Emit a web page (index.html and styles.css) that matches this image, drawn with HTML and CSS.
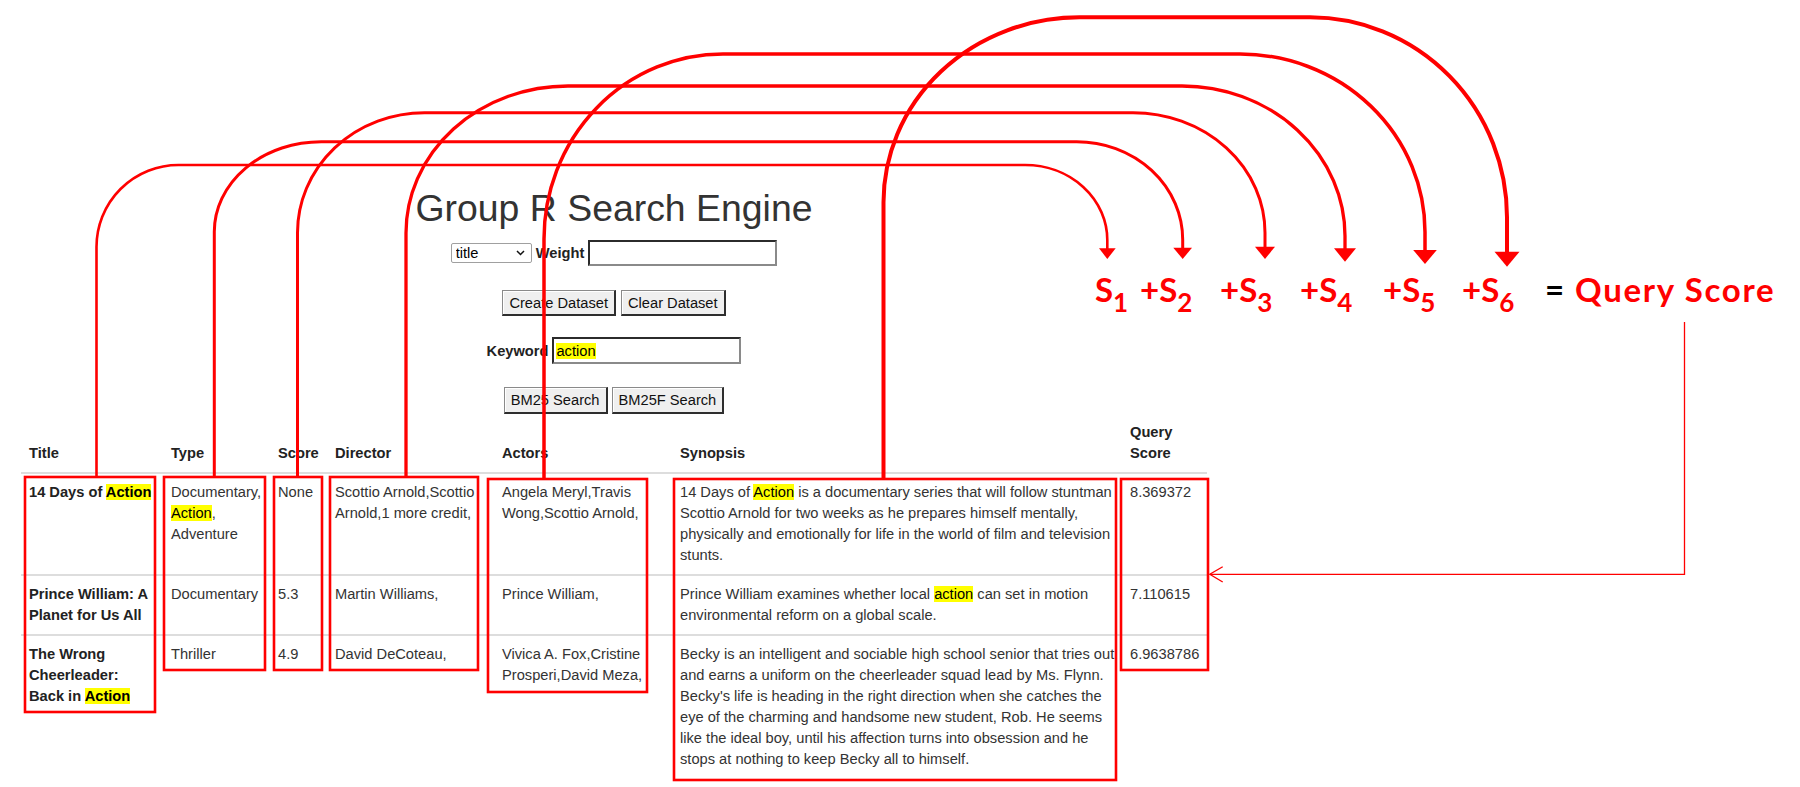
FILE: index.html
```html
<!DOCTYPE html>
<html lang="en">
<head>
<meta charset="utf-8">
<title>Group R Search Engine</title>
<link rel="stylesheet" href="styles.css">
</head>
<body>
<div class="page">
  <h1 class="title">Group R Search Engine</h1>

  <div class="form-row row-weight">
    <div class="select-wrap">
      <select class="field-select"><option>title</option></select>
      <svg class="chevron" width="9" height="6" viewBox="0 0 9 6"><path d="M1 1 L4.5 4.5 L8 1" fill="none" stroke="#111" stroke-width="1.5"/></svg>
    </div>
    <label class="label">Weight</label>
    <input class="text-input" type="text">
  </div>

  <div class="form-row row-dataset">
    <button class="btn">Create Dataset</button>
    <button class="btn">Clear Dataset</button>
  </div>

  <div class="form-row row-keyword">
    <label class="label">Keyword</label>
    <div class="text-input keyword-input"><mark>action</mark></div>
  </div>

  <div class="form-row row-search">
    <button class="btn">BM25 Search</button>
    <button class="btn">BM25F Search</button>
  </div>

  <table class="results">
    <colgroup>
      <col class="c-title"><col class="c-type"><col class="c-score"><col class="c-director"><col class="c-actors"><col class="c-synopsis"><col class="c-qs">
    </colgroup>
    <thead>
      <tr>
        <th>Title</th><th>Type</th><th>Score</th><th>Director</th><th>Actors</th><th>Synopsis</th><th>Query Score</th>
      </tr>
    </thead>
    <tbody>
      <tr>
        <td class="t-title">14 Days of <mark>Action</mark></td>
        <td>Documentary, <mark>Action</mark>, Adventure</td>
        <td>None</td>
        <td>Scottio Arnold,Scottio Arnold,1 more credit,</td>
        <td>Angela Meryl,Travis Wong,Scottio Arnold,</td>
        <td class="t-syn">14 Days of <mark>Action</mark> is a documentary series that will follow stuntman Scottio Arnold for two weeks as he prepares himself mentally, physically and emotionally for life in the world of film and television stunts.</td>
        <td>8.369372</td>
      </tr>
      <tr>
        <td class="t-title">Prince William: A Planet for Us All</td>
        <td>Documentary</td>
        <td>5.3</td>
        <td>Martin Williams,</td>
        <td>Prince William,</td>
        <td class="t-syn">Prince William examines whether local <mark>action</mark> can set in motion environmental reform on a global scale.</td>
        <td>7.110615</td>
      </tr>
      <tr class="last">
        <td class="t-title">The Wrong Cheerleader: Back in <mark>Action</mark></td>
        <td>Thriller</td>
        <td>4.9</td>
        <td>David DeCoteau,</td>
        <td>Vivica A. Fox,Cristine Prosperi,David Meza,</td>
        <td class="t-syn">Becky is an intelligent and sociable high school senior that tries out and earns a uniform on the cheerleader squad lead by Ms. Flynn. Becky's life is heading in the right direction when she catches the eye of the charming and handsome new student, Rob. He seems like the ideal boy, until his affection turns into obsession and he stops at nothing to keep Becky all to himself.</td>
        <td>6.9638786</td>
      </tr>
    </tbody>
  </table>
</div>

<svg class="annotations" width="1800" height="787" viewBox="0 0 1800 787">
  <g fill="none" stroke="#f00" stroke-width="2.6">
    <rect x="25" y="477" width="130" height="235"/>
    <rect x="164" y="477" width="101" height="193"/>
    <rect x="274" y="477" width="48" height="193"/>
    <rect x="330" y="477" width="148" height="193"/>
    <rect x="488" y="479" width="159" height="213"/>
    <rect x="674" y="479" width="442" height="301"/>
    <rect x="1121" y="479" width="87" height="191"/>
  </g>
  <g fill="none" stroke="#f00">
    <path stroke-width="2.6" d="M96.5 477 V247 A82 82 0 0 1 178.5 165 H1025 A82.3 75 0 0 1 1107.3 240 V250"/>
    <path stroke-width="3" d="M214.3 477 V231.7 A107 90 0 0 1 321.3 141.7 H1076.7 A106 98 0 0 1 1182.7 239.7 V249"/>
    <path stroke-width="3" d="M297.5 477 V232.7 A127 120 0 0 1 424.5 112.7 H1133 A132 120 0 0 1 1265 232.7 V248"/>
    <path stroke-width="3.3" d="M406 477 V233 A162 147 0 0 1 568 86 H1182 A163 150 0 0 1 1345 236 V250"/>
    <path stroke-width="3.5" d="M544 479 V239 A179 185 0 0 1 723 54 H1240 A185 178 0 0 1 1425 232 V251"/>
    <path stroke-width="4" d="M883.5 479 V202.3 A196 185 0 0 1 1079.5 17.3 H1310 A197 200 0 0 1 1507 217.3 V253"/>
    <path stroke-width="1.3" d="M1684.5 322 V574.3 H1210"/>
    <path stroke-width="1.3" d="M1222.7 566.7 L1209.8 574.3 L1222.7 582"/>
  </g>
  <g fill="#f00">
    <polygon points="1099,248.3 1115.7,248.3 1107.3,259"/>
    <polygon points="1173.3,247.7 1192,247.7 1182.7,259"/>
    <polygon points="1255,246.7 1275,246.7 1265,259"/>
    <polygon points="1334,248.3 1356,248.3 1345,261.7"/>
    <polygon points="1413.2,250 1436.8,250 1425,264"/>
    <polygon points="1494.5,251.7 1519.5,251.7 1507,266.7"/>
  </g>
</svg>

<div class="formula">
  <span class="term t1">S<span class="sub">1</span></span>
  <span class="term t2">+S<span class="sub">2</span></span>
  <span class="term t3">+S<span class="sub">3</span></span>
  <span class="term t4">+S<span class="sub">4</span></span>
  <span class="term t5">+S<span class="sub">5</span></span>
  <span class="term t6">+S<span class="sub">6</span></span>
  <span class="term eq">=</span>
  <span class="term qs">Query Score</span>
</div>
</body>
</html>
```

FILE: styles.css
```css
html, body {
  margin: 0;
  padding: 0;
  background: #fff;
}

body {
  position: relative;
  width: 1800px;
  height: 787px;
  overflow: hidden;
  font-family: "Liberation Sans", Arial, sans-serif;
  font-size: 14.667px;
  color: #333;
}

.page {
  width: 1186px;
  margin-left: 21px;
  padding-top: 187px;
}

.title {
  margin: 0;
  font-size: 37.4px;
  line-height: 43px;
  font-weight: normal;
  text-align: center;
  color: #333;
}

.form-row {
  display: flex;
  justify-content: center;
  align-items: center;
  gap: 4px;
}

.row-weight { margin-top: 10px; height: 26px; }
.row-dataset { margin-top: 24px; height: 26px; gap: 5px; }
.row-keyword { margin-top: 21px; height: 27px; }
.row-search { margin-top: 23px; height: 27px; gap: 4px; }

.label {
  font-weight: bold;
  color: #222;
  line-height: 20px;
}

.select-wrap {
  position: relative;
  width: 81px;
  height: 20px;
}

.field-select {
  appearance: none;
  -webkit-appearance: none;
  box-sizing: border-box;
  width: 81px;
  height: 20px;
  margin: 0;
  padding: 0 0 0 4px;
  border: 1px solid #a0a0a0;
  border-radius: 2px;
  background: #fff;
  font-family: "Liberation Sans", Arial, sans-serif;
  font-size: 14.667px;
  color: #000;
}

.chevron {
  position: absolute;
  right: 7px;
  top: 7px;
}

.text-input {
  box-sizing: border-box;
  width: 189px;
  height: 26px;
  margin: 0;
  padding: 0 2px;
  border-style: solid;
  border-width: 2px;
  border-color: #2b2b2b #8a8a8a #8a8a8a #2b2b2b;
  background: #fff;
  font-family: "Liberation Sans", Arial, sans-serif;
  font-size: 14.667px;
  color: #000;
}

.keyword-input {
  height: 27px;
  display: flex;
  align-items: center;
}

.keyword-input mark {
  line-height: 16px;
}

.btn {
  box-sizing: border-box;
  height: 26px;
  margin: 0;
  padding: 0 6px;
  border-style: solid;
  border-width: 1px 2px 2px 1px;
  border-color: #8a8a8a #2e2e2e #2e2e2e #8a8a8a;
  background: #efefef;
  box-shadow: inset 1px 1px 0 #fff;
  font-family: "Liberation Sans", Arial, sans-serif;
  font-size: 14.667px;
  color: #111;
  white-space: nowrap;
}

.row-search .btn { height: 27px; }

mark {
  background: #ffff00;
  color: #000;
}

.results {
  width: 1186px;
  table-layout: fixed;
  border-collapse: separate;
  border-spacing: 0;
  line-height: 21px;
}

.c-title { width: 142px; }
.c-type { width: 107px; }
.c-score { width: 57px; }
.c-director { width: 167px; }
.c-actors { width: 178px; }
.c-synopsis { width: 450px; }
.c-qs { width: 85px; }

.results th {
  padding: 8px;
  text-align: left;
  vertical-align: bottom;
  font-weight: bold;
  color: #222;
  border-bottom: 2px solid #dddddd;
}

.results td {
  padding: 8px;
  vertical-align: top;
  color: #333;
  border-bottom: 2px solid #dddddd;
}

.results td.t-syn {
  padding-right: 3px;
}

.results tr.last td {
  border-bottom: none;
}

.results td.t-title {
  font-weight: bold;
  color: #222;
}

.annotations {
  position: absolute;
  left: 0;
  top: 0;
  pointer-events: none;
}

.formula {
  position: absolute;
  left: 0;
  top: 0;
  width: 1800px;
  height: 0;
}

.term {
  position: absolute;
  top: 273px;
  font-family: Lato, "Open Sans", sans-serif;
  font-weight: 700;
  font-size: 33px;
  line-height: 33px;
  color: #f00;
  white-space: nowrap;
}

.sub {
  font-size: 26px;
  vertical-align: -10px;
  line-height: 0;
}

.t1 { left: 1095px; }
.t2 { left: 1140px; }
.t3 { left: 1220px; }
.t4 { left: 1300px; }
.t5 { left: 1383px; }
.t6 { left: 1462px; }
.eq { left: 1545px; color: #000; }
.qs { left: 1575px; letter-spacing: 1.7px; }
```
